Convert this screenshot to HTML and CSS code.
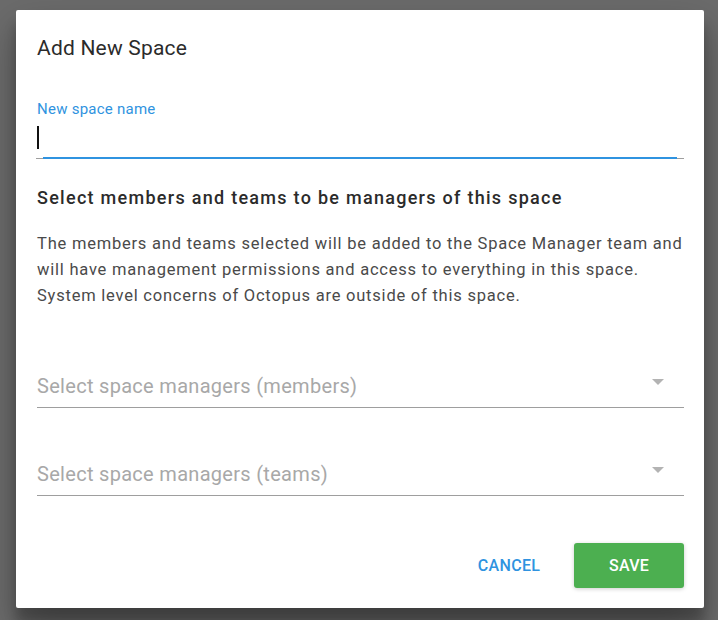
FILE: index.html
```html
<!DOCTYPE html>
<html>
<head>
<meta charset="utf-8">
<link rel="stylesheet" href="styles.css">
</head>
<body>
<div class="backdrop">
  <div class="dialog">
    <h2 class="title">Add New Space</h2>
    <div class="field">
      <label class="label">New space name</label>
      <div class="input"><span class="caret"></span></div>
      <div class="underline"><div class="underline-focus"></div></div>
    </div>
    <h3 class="heading">Select members and teams to be managers of this space</h3>
    <p class="desc">The members and teams selected will be added to the Space Manager team and<br>will have management permissions and access to everything in this space.<br>System level concerns of Octopus are outside of this space.</p>
    <div class="select">
      <span class="placeholder">Select space managers (members)</span>
      <span class="arrow"></span>
    </div>
    <div class="select">
      <span class="placeholder">Select space managers (teams)</span>
      <span class="arrow"></span>
    </div>
    <div class="actions">
      <button class="btn btn-cancel">CANCEL</button>
      <button class="btn btn-save">SAVE</button>
    </div>
  </div>
</div>
</body>
</html>
```
FILE: styles.css
```css
html, body {
  margin: 0;
  padding: 0;
  height: 100%;
}
body {
  background: #6b6b6b;
  font-family: Roboto, "Liberation Sans", sans-serif;
}
.backdrop {
  padding: 10px 14px 0 16px;
}
.dialog {
  width: 688px;
  height: 598px;
  box-sizing: border-box;
  background: #fff;
  border-radius: 2px;
  box-shadow: 0 19px 38px rgba(0,0,0,0.30), 0 15px 12px rgba(0,0,0,0.22);
  padding: 0 20px 0 21px;
  display: flex;
  flex-direction: column;
}
.title {
  margin: 26px 0 0;
  font-size: 21px;
  font-weight: 400;
  line-height: 24px;
  letter-spacing: 0.2px;
  color: #2b2b2b;
}
.field {
  margin-top: 41px;
  position: relative;
}
.label {
  display: block;
  font-size: 15px;
  line-height: 16px;
  letter-spacing: 0.25px;
  color: #2f93e0;
}
.input {
  height: 41px;
  position: relative;
}
.caret {
  position: absolute;
  left: 0;
  top: 9px;
  width: 2px;
  height: 23px;
  background: #111;
}
.underline {
  height: 1px;
  background: #9e9e9e;
  margin-left: -1px;
  position: relative;
}
.underline-focus {
  position: absolute;
  left: 7px;
  right: 7px;
  top: -1px;
  height: 2px;
  background: #2f93e0;
}
.heading {
  margin: 27px 0 0;
  font-size: 18px;
  font-weight: 500;
  line-height: 24px;
  letter-spacing: 1.28px;
  color: #2b2b2b;
}
.desc {
  margin: 21px -20px 0 0;
  font-size: 16.5px;
  line-height: 26px;
  letter-spacing: 0.78px;
  color: #4a4a4a;
  white-space: nowrap;
}
.select {
  margin-top: 53px;
  height: 45px;
  border-bottom: 1px solid #9e9e9e;
  position: relative;
  display: flex;
  align-items: flex-end;
}
.select + .select {
  margin-top: 42px;
}
.placeholder {
  font-size: 20px;
  line-height: 24px;
  letter-spacing: 0.3px;
  color: #a8a8a8;
  padding-bottom: 9px;
}
.arrow {
  position: absolute;
  right: 20px;
  top: 17px;
  width: 0;
  height: 0;
  border-left: 6px solid transparent;
  border-right: 6px solid transparent;
  border-top: 6px solid #b3b3b3;
}
.actions {
  margin-top: auto;
  margin-bottom: 20px;
  display: flex;
  justify-content: flex-end;
  align-items: center;
}
.btn {
  font-family: Roboto, "Liberation Sans", sans-serif;
  font-size: 16px;
  font-weight: 500;
  letter-spacing: 0.3px;
  border: none;
  cursor: pointer;
  height: 45px;
}
.btn-cancel {
  background: transparent;
  color: #2f93e0;
  width: 110px;
  margin-right: 10px;
}
.btn-save {
  background: #4caf50;
  color: #fff;
  width: 110px;
  border-radius: 3px;
  box-shadow: 0 1px 4px rgba(0,0,0,0.2);
}
```
